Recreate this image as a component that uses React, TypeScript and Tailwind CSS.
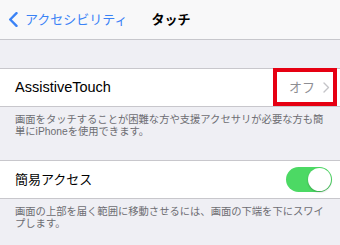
import React from "react";

const font = { fontFamily: '"Liberation Sans", "Noto Sans CJK JP", sans-serif' };

export default function App() {
  return (
    <div className="w-[340px] h-[245px] overflow-hidden bg-[#efeff4] relative" style={font}>
      {/* nav */}
      <div className="h-[40px] bg-[#f8f8f9] border-b border-[#c7c7cc] flex items-center pl-[8px]">
        <svg width="10" height="15" viewBox="0 0 10 15" className="shrink-0">
          <path d="M8.5 1.2 L2.2 7.5 L8.5 13.8" fill="none" stroke="#3a82f6" strokeWidth="2.4" strokeLinecap="round" strokeLinejoin="round" />
        </svg>
        <span className="ml-[7px] text-[13px] leading-[16px] text-[#3a82f6]">アクセシビリティ</span>
        <span className="ml-[24px] text-[13px] leading-[16px] font-bold text-black">タッチ</span>
      </div>
      <div className="h-[28px]" />
      {/* row 1 */}
      <div className="h-[39px] bg-white border-y border-[#c8c7cc] flex items-center pl-[15px] pr-[10px]">
        <span className="text-[14.5px] text-black flex-1">AssistiveTouch</span>
        <span className="text-[13px] text-[#8e8e93] mr-[8px]">オフ</span>
        <svg width="7" height="11" viewBox="0 0 7 11">
          <path d="M1 1 L5.5 5.5 L1 10" fill="none" stroke="#c4c4c8" strokeWidth="1.4" strokeLinecap="round" strokeLinejoin="round" />
        </svg>
      </div>
      <div className="h-[53px] px-[15px] pt-[7px] text-[10.3px] leading-[12px] text-[#6d6d72]">
        画面をタッチすることが困難な方や支援アクセサリが必要な方も簡単にiPhoneを使用できます。
      </div>
      {/* row 2 */}
      <div className="h-[39px] bg-white border-y border-[#c8c7cc] flex items-center pl-[15px] pr-[8px]">
        <span className="text-[13px] text-black flex-1">簡易アクセス</span>
        <div className="w-[46px] h-[25px] rounded-full bg-[#4cd964] p-[1px] flex justify-end">
          <div className="w-[23px] h-[23px] rounded-full bg-white shadow-[0_1px_2px_rgba(0,0,0,0.25)]" />
        </div>
      </div>
      <div className="px-[15px] pt-[7px] text-[10.3px] leading-[12px] text-[#6d6d72]">
        画面の上部を届く範囲に移動させるには、画面の下端を下にスワイプします。
      </div>
      {/* red highlight annotation */}
      <div className="absolute left-[273px] top-[68px] w-[64px] h-[38px] border-[4px] border-[#e60012]" />
    </div>
  );
}
